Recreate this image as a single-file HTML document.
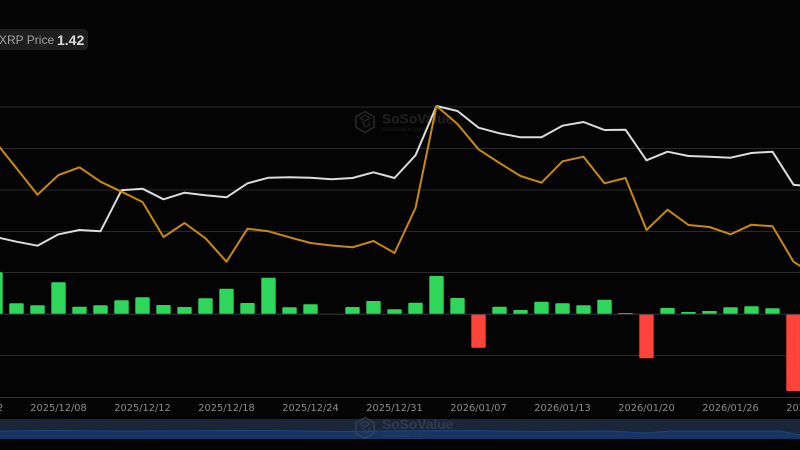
<!DOCTYPE html>
<html><head><meta charset="utf-8">
<style>
html,body{margin:0;padding:0;background:#040404;width:800px;height:450px;overflow:hidden}
svg{display:block}
text{font-family:"DejaVu Sans","Liberation Sans",sans-serif}
.ax text{font-size:9.8px;fill:#8c8c8c;text-anchor:middle}
</style></head>
<body>
<svg width="800" height="450" viewBox="0 0 800 450" xmlns="http://www.w3.org/2000/svg">
<rect width="800" height="450" fill="#040404"/>
<!-- tooltip label -->
<rect x="-6" y="29" width="94" height="21" rx="4" fill="#1e1e1e"/>
<text x="-1" y="44" fill="#a3a3a3" style="font-family:'Liberation Sans',sans-serif;font-size:12px">XRP Price</text>
<text x="57" y="45" fill="#dcdcdc" font-weight="700" style="font-family:'Liberation Sans',sans-serif;font-size:14px">1.42</text>
<!-- grid -->
<g fill="#2a2a2a">
<rect x="0" y="106.500" width="800" height="1"/>
<rect x="0" y="148" width="800" height="1"/>
<rect x="0" y="189.500" width="800" height="1"/>
<rect x="0" y="231" width="800" height="1"/>
<rect x="0" y="272" width="800" height="1"/>
<rect x="0" y="355" width="800" height="1"/>
<rect x="0" y="397" width="800" height="1" fill="#333"/>
</g>
<!-- watermark top -->
<g>
<path d="M365 111.500l9 5.200v10.600l-9 5.200-9-5.200v-10.600z" fill="none" stroke="#212121" stroke-width="2"/>
<path d="M360 118l5-2.800 5 2.800-5 2.800zM361 121.500l3.500 2v4M369.500 121.500v3.500l-3 1.800" fill="none" stroke="#212121" stroke-width="1.500"/>
<text x="382" y="123.500" fill="#212121" font-weight="700" style="font-family:'Liberation Sans',sans-serif;font-size:13.800px">SoSoValue</text>
<text x="382" y="131" fill="#1c1c1c" style="font-family:'Liberation Sans',sans-serif;font-size:6.500px">sosovalue.com</text>
</g>
<!-- bars -->
<g fill="#30d65a">
<rect x="-11.700" y="272.300" width="14.400" height="41.700" rx="1"/>
<rect x="9.300" y="303.300" width="14.400" height="10.700" rx="1"/>
<rect x="30.300" y="305.300" width="14.400" height="8.700" rx="1"/>
<rect x="51.300" y="282.300" width="14.400" height="31.700" rx="1"/>
<rect x="72.300" y="306.700" width="14.400" height="7.300" rx="1"/>
<rect x="93.300" y="305.300" width="14.400" height="8.700" rx="1"/>
<rect x="114.300" y="300.300" width="14.400" height="13.700" rx="1"/>
<rect x="135.300" y="297.300" width="14.400" height="16.700" rx="1"/>
<rect x="156.300" y="305" width="14.400" height="9" rx="1"/>
<rect x="177.300" y="307" width="14.400" height="7" rx="1"/>
<rect x="198.300" y="298.300" width="14.400" height="15.700" rx="1"/>
<rect x="219.300" y="288.700" width="14.400" height="25.300" rx="1"/>
<rect x="240.300" y="303" width="14.400" height="11" rx="1"/>
<rect x="261.300" y="277.700" width="14.400" height="36.300" rx="1"/>
<rect x="282.300" y="307.300" width="14.400" height="6.700" rx="1"/>
<rect x="303.300" y="304.300" width="14.400" height="9.700" rx="1"/>
<rect x="345.300" y="307" width="14.400" height="7" rx="1"/>
<rect x="366.300" y="301" width="14.400" height="13" rx="1"/>
<rect x="387.300" y="309.300" width="14.400" height="4.700" rx="1"/>
<rect x="408.300" y="302.700" width="14.400" height="11.300" rx="1"/>
<rect x="429.300" y="276" width="14.400" height="38" rx="1"/>
<rect x="450.300" y="298" width="14.400" height="16" rx="1"/>
<rect x="492.300" y="306.700" width="14.400" height="7.300" rx="1"/>
<rect x="513.300" y="310" width="14.400" height="4" rx="1"/>
<rect x="534.300" y="301.700" width="14.400" height="12.300" rx="1"/>
<rect x="555.300" y="303.300" width="14.400" height="10.700" rx="1"/>
<rect x="576.300" y="305.300" width="14.400" height="8.700" rx="1"/>
<rect x="597.300" y="299.700" width="14.400" height="14.300" rx="1"/>
<rect x="618.300" y="313" width="14.400" height="1"/>
<rect x="660.300" y="308" width="14.400" height="6" rx="1"/>
<rect x="681.300" y="312" width="14.400" height="2"/>
<rect x="702.300" y="311" width="14.400" height="3"/>
<rect x="723.300" y="307.300" width="14.400" height="6.700" rx="1"/>
<rect x="744.300" y="306.300" width="14.400" height="7.700" rx="1"/>
<rect x="765.300" y="308.300" width="14.400" height="5.700" rx="1"/>
</g>
<g fill="#fe443a">
<rect x="471.300" y="314" width="14.400" height="33.700" rx="1"/>
<rect x="639.300" y="314" width="14.400" height="44.300" rx="1"/>
<rect x="786.300" y="314" width="14.400" height="77" rx="1"/>
</g>
<rect x="0" y="313.700" width="800" height="1" fill="#3a3a3a"/>
<!-- white line -->
<polyline fill="none" stroke="#dcdcdc" stroke-width="2" stroke-linejoin="round" points="-4.500,237 16.500,241.700 37.500,245.700 58.500,234.300 79.500,230 100.500,231.300 121.500,190.300 142.500,188.700 163.500,199.300 184.500,192.700 205.500,195.300 226.500,197.300 247.500,183.300 268.500,177.700 289.500,177.300 310.500,177.700 331.500,179.300 352.500,178 373.500,172.300 394.500,178 415.500,155.300 436.500,106 457.500,111 478.500,127.700 499.500,133.300 520.500,137.300 541.500,137.300 562.500,125.700 583.500,122 604.500,130 625.500,129.700 646.500,160.300 667.500,151.700 688.500,156 709.500,156.700 730.500,157.700 751.500,153 772.500,151.700 793.500,184.700 814.500,187"/>
<!-- gold line -->
<polyline fill="none" stroke="#c98a06" stroke-width="2" stroke-linejoin="round" points="-4.500,142 16.500,168.300 37.500,194.700 58.500,175 79.500,167.300 100.500,181.700 121.500,191.700 142.500,202 163.500,237 184.500,223 205.500,238.300 226.500,261.700 247.500,228.700 268.500,231.300 289.500,237.300 310.500,243 331.500,245.500 352.500,247.300 373.500,241 394.500,253 415.500,208 436.500,106 457.500,124 478.500,149.300 499.500,163 520.500,176 541.500,182.700 562.500,161.300 583.500,156.700 604.500,183.300 625.500,178 646.500,230 667.500,209.700 688.500,225 709.500,227 730.500,234.300 751.500,224.700 772.500,226.300 793.500,261.700 814.500,275"/>
<!-- x axis -->
<g class="ax">
<text x="-25" y="411">2025/12/02</text>
<text x="58.500" y="411">2025/12/08</text>
<text x="142.500" y="411">2025/12/12</text>
<text x="226.500" y="411">2025/12/18</text>
<text x="310.500" y="411">2025/12/24</text>
<text x="394.500" y="411">2025/12/31</text>
<text x="478.500" y="411">2026/01/07</text>
<text x="562.500" y="411">2026/01/13</text>
<text x="646.500" y="411">2026/01/20</text>
<text x="730.500" y="411">2026/01/26</text>
<text x="814.500" y="411">2026/02/02</text>
</g>
<!-- slider -->
<rect x="0" y="419" width="800" height="20" fill="#1b263b"/>
<path d="M0 431 L50 430.500 L120 431 L270 430.500 L340 431.500 L470 430.500 L500 431 L540 431.500 L610 431 L646 433 L670 431 L780 431 L800 435 L800 439 L0 439Z" fill="#183463"/>
<polyline fill="none" stroke="#1d4380" stroke-width="1" points="0,431 50,430.500 120,431 270,430.500 340,431.500 470,430.500 500,431 540,431.500 610,431 646,433 670,431 780,431 800,435"/>
<!-- watermark bottom -->
<g opacity=".55">
<path d="M365 417.500l9 5.200v10.600l-9 5.200-9-5.200v-10.600z" fill="none" stroke="#3f4c66" stroke-width="2"/>
<path d="M360 424l5-2.800 5 2.800-5 2.800zM361 427.500l3.500 2v4M369.500 427.500v3.500l-3 1.800" fill="none" stroke="#3f4c66" stroke-width="1.500"/>
<text x="382" y="429" fill="#3f4c66" font-weight="700" style="font-family:'Liberation Sans',sans-serif;font-size:13.800px">SoSoValue</text>
<text x="382" y="437" fill="#33486e" style="font-family:'Liberation Sans',sans-serif;font-size:6.500px">sosovalue.com</text>
</g>
</svg>
</body></html>
